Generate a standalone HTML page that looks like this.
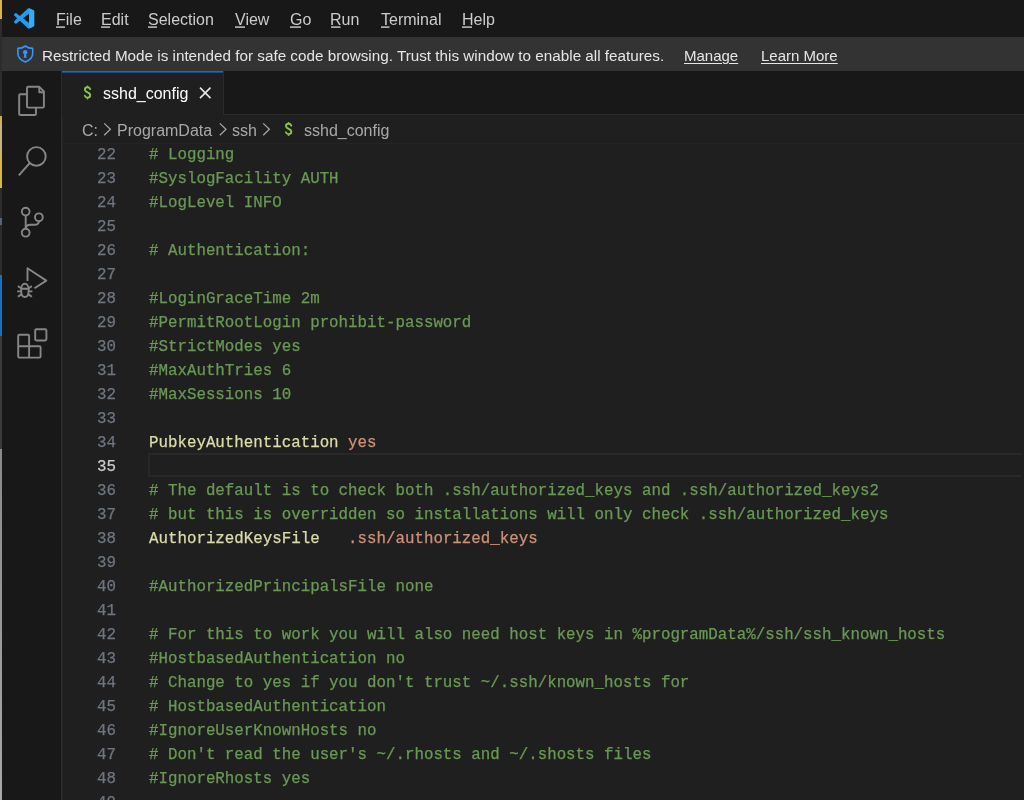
<!DOCTYPE html>
<html><head><meta charset="utf-8">
<style>
html,body{margin:0;padding:0;}
body{-webkit-font-smoothing:antialiased;width:1024px;height:800px;overflow:hidden;position:relative;background:#1f1f1f;font-family:"Liberation Sans",sans-serif;}
.abs{position:absolute;}
.menu,.bt,.ui,.ln,.cl{will-change:transform;}
#strip{position:absolute;left:0;top:0;width:2px;height:800px;background:linear-gradient(to bottom,#d8b44c 0px,#d8b44c 19px,#2c2c2c 19px,#2c2c2c 116px,#d4a93c 116px,#c9b27e 124px,#c9b27e 150px,#d9b64c 160px,#d9b64c 188px,#2c2c2c 188px,#2c2c2c 218px,#56657a 218px,#56657a 225px,#2c2c2c 225px,#2c2c2c 275px,#1c6fc0 275px,#1c6fc0 336px,#3a3a3a 336px,#3a3a3a 449px,#8a8a8a 449px,#a8a8a8 800px);}
#strip2{position:absolute;left:2px;top:0;width:1px;height:800px;background:#333;}
#title{position:absolute;left:2px;top:0;width:1022px;height:37px;background:#181818;}
.menu{position:absolute;top:9.5px;font-size:16px;color:#cccccc;white-space:nowrap;line-height:20px;}

#banner{position:absolute;left:2px;top:37px;width:1022px;height:34px;background:#333333;}
.bt{position:absolute;top:46.5px;font-size:15.26px;color:#e6e6e6;white-space:nowrap;line-height:18px;}
.bt.link{text-decoration:underline;text-underline-offset:2px;}
#act{position:absolute;left:2px;top:71px;width:59px;height:729px;background:#181818;border-right:1px solid #2b2b2b;}
#act2{position:absolute;left:62px;top:114px;width:1px;height:686px;background:#262626;}
#tabs{position:absolute;left:62px;top:71px;width:962px;height:43px;background:#181818;border-bottom:1px solid #2b2b2b;}
#tab{position:absolute;left:62px;top:71px;width:161px;height:44px;background:#1f1f1f;border-right:1px solid #2b2b2b;}
#tabtop{position:absolute;left:62px;top:71px;width:161px;height:1px;background:#0a72c8;border-bottom:1px solid #12508a;}
.ui{position:absolute;white-space:nowrap;font-size:16px;line-height:20px;}
#bcshadow{position:absolute;left:62px;top:143px;width:962px;height:1px;background:#242424;}
.ln{-webkit-text-stroke:0.25px;position:absolute;left:62px;width:54px;text-align:right;font-family:"Liberation Mono",monospace;font-size:15.8px;line-height:24px;color:#6e7681;}
.ln.act{color:#cccccc;}
.cl{-webkit-text-stroke:0.25px;position:absolute;left:148.7px;white-space:pre;font-family:"Liberation Mono",monospace;font-size:15.8px;letter-spacing:0.0px;line-height:24px;}
.c{color:#6a9955;} .k{color:#dcdcaa;} .s{color:#ce9178;}
#curline{position:absolute;left:148px;top:453px;width:872px;height:20px;border:2px solid #282828;border-right:none;}
svg{position:absolute;overflow:visible;}
</style></head><body>
<div id="strip"></div><div id="strip2"></div>
<div id="title"></div>

<div class="menu" style="left:55.5px">File</div>
<div class="menu" style="left:101px">Edit</div>
<div class="menu" style="left:148px">Selection</div>
<div class="menu" style="left:235px">View</div>
<div class="menu" style="left:290px">Go</div>
<div class="menu" style="left:330px">Run</div>
<div class="menu" style="left:381px">Terminal</div>
<div class="menu" style="left:461.5px">Help</div>
<div id="banner"></div>
<div class="bt" style="left:42px">Restricted Mode is intended for safe code browsing. Trust this window to enable all features.</div>
<div class="bt link" style="left:683.5px;font-size:15px;top:47px">Manage</div>
<div class="bt link" style="left:761px;font-size:15px;top:47px">Learn More</div>
<div id="act"></div><div id="act2"></div>
<div id="tabs"></div>
<div id="tab"></div>
<div id="tabtop"></div>
<div class="ui" style="left:103px;top:84px;color:#ffffff">sshd_config</div>
<div class="ui" style="left:82px;top:120.5px;color:#a9a9a9">C:</div>
<div class="ui" style="left:117px;top:120.5px;color:#a9a9a9">ProgramData</div>
<div class="ui" style="left:232px;top:120.5px;color:#a9a9a9">ssh</div>
<div class="ui" style="left:304px;top:120.5px;color:#a9a9a9">sshd_config</div>
<div id="bcshadow"></div>
<div id="curline"></div>
<div class="ln" style="top:143px">22</div>
<div class="cl" style="top:143px"><span class="c"># Logging</span></div>
<div class="ln" style="top:167px">23</div>
<div class="cl" style="top:167px"><span class="c">#SyslogFacility AUTH</span></div>
<div class="ln" style="top:191px">24</div>
<div class="cl" style="top:191px"><span class="c">#LogLevel INFO</span></div>
<div class="ln" style="top:215px">25</div>
<div class="ln" style="top:239px">26</div>
<div class="cl" style="top:239px"><span class="c"># Authentication:</span></div>
<div class="ln" style="top:263px">27</div>
<div class="ln" style="top:287px">28</div>
<div class="cl" style="top:287px"><span class="c">#LoginGraceTime 2m</span></div>
<div class="ln" style="top:311px">29</div>
<div class="cl" style="top:311px"><span class="c">#PermitRootLogin prohibit-password</span></div>
<div class="ln" style="top:335px">30</div>
<div class="cl" style="top:335px"><span class="c">#StrictModes yes</span></div>
<div class="ln" style="top:359px">31</div>
<div class="cl" style="top:359px"><span class="c">#MaxAuthTries 6</span></div>
<div class="ln" style="top:383px">32</div>
<div class="cl" style="top:383px"><span class="c">#MaxSessions 10</span></div>
<div class="ln" style="top:407px">33</div>
<div class="ln" style="top:431px">34</div>
<div class="cl" style="top:431px"><span class="k">PubkeyAuthentication</span><span class="t"> </span><span class="s">yes</span></div>
<div class="ln act" style="top:455px">35</div>
<div class="ln" style="top:479px">36</div>
<div class="cl" style="top:479px"><span class="c"># The default is to check both .ssh/authorized_keys and .ssh/authorized_keys2</span></div>
<div class="ln" style="top:503px">37</div>
<div class="cl" style="top:503px"><span class="c"># but this is overridden so installations will only check .ssh/authorized_keys</span></div>
<div class="ln" style="top:527px">38</div>
<div class="cl" style="top:527px"><span class="k">AuthorizedKeysFile</span><span class="t">   </span><span class="s">.ssh/authorized_keys</span></div>
<div class="ln" style="top:551px">39</div>
<div class="ln" style="top:575px">40</div>
<div class="cl" style="top:575px"><span class="c">#AuthorizedPrincipalsFile none</span></div>
<div class="ln" style="top:599px">41</div>
<div class="ln" style="top:623px">42</div>
<div class="cl" style="top:623px"><span class="c"># For this to work you will also need host keys in %programData%/ssh/ssh_known_hosts</span></div>
<div class="ln" style="top:647px">43</div>
<div class="cl" style="top:647px"><span class="c">#HostbasedAuthentication no</span></div>
<div class="ln" style="top:671px">44</div>
<div class="cl" style="top:671px"><span class="c"># Change to yes if you don&#x27;t trust ~/.ssh/known_hosts for</span></div>
<div class="ln" style="top:695px">45</div>
<div class="cl" style="top:695px"><span class="c"># HostbasedAuthentication</span></div>
<div class="ln" style="top:719px">46</div>
<div class="cl" style="top:719px"><span class="c">#IgnoreUserKnownHosts no</span></div>
<div class="ln" style="top:743px">47</div>
<div class="cl" style="top:743px"><span class="c"># Don&#x27;t read the user&#x27;s ~/.rhosts and ~/.shosts files</span></div>
<div class="ln" style="top:767px">48</div>
<div class="cl" style="top:767px"><span class="c">#IgnoreRhosts yes</span></div>
<div class="ln" style="top:791px">49</div>

<svg style="left:0;top:0" width="1024" height="800" viewBox="0 0 1024 800">
 <g transform="translate(13.9,8.1) scale(0.203,0.205)">
  <path fill="#1f9cf0" fill-rule="evenodd" d="M70.9119 99.3171C72.4869 99.9307 74.2828 99.8914 75.8725 99.1264L96.4608 89.2197C98.6242 88.1787 100 85.9892 100 83.5872V16.4133C100 14.0113 98.6243 11.8218 96.4609 10.7808L75.8725 0.873756C73.7862 -0.130129 71.3446 0.11576 69.5135 1.44695C69.252 1.63711 69.0028 1.84943 68.769 2.08341L29.3551 38.0415L12.1872 25.0096C10.589 23.7965 8.35363 23.8959 6.86933 25.2461L1.36303 30.2549C-0.452552 31.9064 -0.454633 34.7627 1.35853 36.417L16.2471 50.0001L1.35853 63.5832C-0.454633 65.2374 -0.452552 68.0938 1.36303 69.7453L6.86933 74.7541C8.35363 76.1043 10.589 76.2037 12.1872 74.9905L29.3551 61.9587L68.769 97.9167C69.3925 98.5406 70.1246 99.0104 70.9119 99.3171ZM75.0152 27.2989L45.1091 50.0001L75.0152 72.7012V27.2989Z"/>
  <path fill="#3aa9f5" d="M75.0152 0.6 L96.4609 10.7808 C98.6243 11.8218 100 14.0113 100 16.4133 V83.5872 C100 85.9892 98.6242 88.1787 96.4608 89.2197 L75.0152 99.4 Z"/>
 </g>
 <!-- shield -->
 <g fill="none" stroke="#3794ff" stroke-width="1.6" stroke-linejoin="round">
  <path d="M25.3,46 C23.2,47.6 20.6,48.4 17.9,48.4 V53.6 C17.9,57.2 20.6,60.2 25.3,62 C30,60.2 32.7,57.2 32.7,53.6 V48.4 C30,48.4 27.4,47.6 25.3,46 Z"/>
 </g>
 <g fill="#3794ff">
  <circle cx="25.2" cy="52.2" r="2.2"/>
  <path d="M24.4,53.4 H26 L26.7,57.7 H23.7 Z"/>
 </g>
 <!-- activity icons -->
 <g fill="none" stroke="#868686" stroke-width="1.9" stroke-linejoin="round" stroke-linecap="butt">
  <path d="M27,106.6 V88 Q27,86.8 28.2,86.8 H39.3 L43.9,91.4 V106.6 Q43.9,107.6 42.9,107.6 H28.2 Q27,107.6 27,106.6 Z"/>
  <path d="M39.3,86.8 V92.2 H43.9"/>
  <path d="M27,94.2 H20.3 Q19.2,94.2 19.2,95.3 V114 Q19.2,115 20.3,115 H34.9 Q35.95,115 35.95,114 V107.6"/>
  <circle cx="36.4" cy="156.4" r="9.3"/>
  <path d="M29.8,163 L18.8,175.4"/>
  <circle cx="25.7" cy="211.6" r="3.9"/>
  <circle cx="25.7" cy="232.7" r="3.9"/>
  <circle cx="38.9" cy="217.3" r="3.9"/>
  <path d="M25.7,215.5 V228.8"/>
  <path d="M38.9,221.2 C38.9,223.6 37.3,224.7 34.5,224.7 H30.5 C27.6,224.7 25.7,226.3 25.7,228.8"/>
  <path d="M27.5,281 V268.3 L46.3,280.6 L34.5,288.2"/>
  <path d="M21.2,288.8 C21.2,285.9 22.8,283.8 24.9,283.8 C27,283.8 28.6,285.9 28.6,288.8 V291.2 C28.6,294.8 27,297 24.9,297 C22.8,297 21.2,294.8 21.2,291.2 Z M21.2,288.8 H28.6"/>
  <path d="M17.9,286.1 L21.2,288.2 M31.9,286.1 L28.6,288.2 M17.2,291.4 H21.2 M28.6,291.4 H32.4 M17.9,296.8 L21.3,294.4 M31.9,296.8 L28.5,294.4"/>
  <rect x="35.2" y="329.3" width="11.2" height="11.2" rx="1.2"/>
  <path d="M18.2,346.2 V336 Q18.2,334.8 19.4,334.8 H27.9 Q29.1,334.8 29.1,336 V346.2 H39.4 Q40.6,346.2 40.6,347.4 V356.4 Q40.6,357.6 39.4,357.6 H19.4 Q18.2,357.6 18.2,356.4 Z M18.2,346.2 H29.1 V357.6"/>
 </g>
 <!-- tab $ -->
 <g fill="none" stroke="#8dc149" stroke-width="1.9" stroke-linecap="round">
  <path d="M90.2,89.2 C89.7,88 88.7,87.3 87.5,87.3 C85.9,87.3 84.9,88.3 84.9,89.6 C84.9,91.1 86.1,91.8 87.6,92.4 C89.2,93 90.2,93.8 90.2,95.3 C90.2,96.7 89.1,97.6 87.5,97.6 C86.2,97.6 85.2,96.9 84.8,95.8 M87.5,86.4 V87.3 M87.5,97.6 V98.5"/>
 </g>
 <!-- close X -->
 <path d="M200,87.6 L210.5,98.1 M210.5,87.6 L200,98.1" stroke="#e6e6e6" stroke-width="1.6" fill="none"/>
 <!-- breadcrumb chevrons -->
 <g fill="none" stroke="#a9a9a9" stroke-width="1.2">
  <path d="M104.2,123.4 L110.4,129.3 L104.2,135.2"/>
  <path d="M219.8,123.4 L226,129.3 L219.8,135.2"/>
  <path d="M263.2,123.4 L269.4,129.3 L263.2,135.2"/>
 </g>
 <g fill="none" stroke="#8dc149" stroke-width="1.9" stroke-linecap="round">
  <path d="M291.3,125.7 C290.8,124.5 289.8,123.8 288.6,123.8 C287,123.8 286,124.8 286,126.1 C286,127.6 287.2,128.3 288.7,128.9 C290.3,129.5 291.3,130.3 291.3,131.8 C291.3,133.2 290.2,134.1 288.6,134.1 C287.3,134.1 286.3,133.4 285.9,132.3 M288.6,122.9 V123.8 M288.6,134.1 V135"/>
 </g>
 <!-- menu mnemonics underline -->
 <g fill="#cccccc">
  <rect x="56" y="26.4" width="9" height="1.4"/>
  <rect x="101" y="26.4" width="9" height="1.4"/>
  <rect x="148" y="26.4" width="9" height="1.4"/>
  <rect x="235" y="26.4" width="10" height="1.4"/>
  <rect x="290" y="26.4" width="11" height="1.4"/>
  <rect x="331" y="26.4" width="9.5" height="1.4"/>
  <rect x="381" y="26.4" width="8.5" height="1.4"/>
  <rect x="462" y="26.4" width="10" height="1.4"/>
 </g>
</svg>

</body></html>
